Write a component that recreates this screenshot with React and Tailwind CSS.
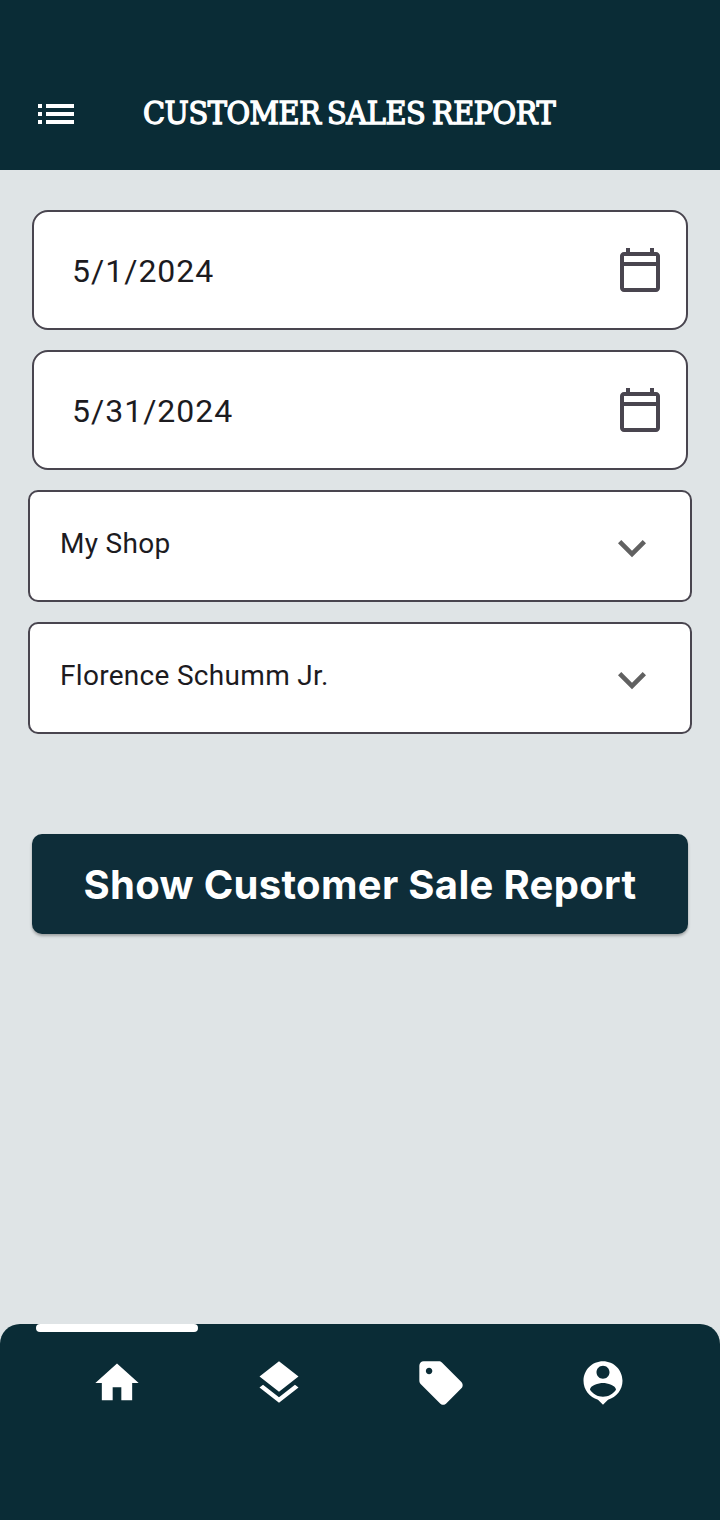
const iconPaths = {
  list: 'M3 13h2v-2H3v2zm0 4h2v-2H3v2zm0-8h2V7H3v2zm4 4h14v-2H7v2zm0 4h14v-2H7v2zM7 7v2h14V7H7z',
  calendar:
    'M20 3h-1V1h-2v2H7V1H5v2H4c-1.1 0-2 .9-2 2v16c0 1.1.9 2 2 2h16c1.1 0 2-.9 2-2V5c0-1.1-.9-2-2-2zm0 2v3H4V5h16zM4 21V10h16v11H4z',
  chevron: 'M7.41 8.59 12 13.17l4.59-4.58L18 10l-6 6-6-6z',
  home: 'M10 20v-6h4v6h5v-8h3L12 3 2 12h3v8z',
  layers:
    'M11.99 18.54l-7.37-5.73L3 14.07l9 7 9-7-1.63-1.27-7.38 5.74zM12 16l7.36-5.73L21 9l-9-7-9 7 1.63 1.27L12 16z',
  tag: 'M21.41 11.58l-9-9C12.05 2.22 11.55 2 11 2H4c-1.1 0-2 .9-2 2v7c0 .55.22 1.05.59 1.42l9 9c.36.36.86.58 1.41.58.55 0 1.05-.22 1.41-.59l7-7c.37-.36.59-.86.59-1.41 0-.55-.23-1.06-.59-1.42zM6.5 8C5.67 8 5 7.33 5 6.5S5.67 5 6.5 5 8 5.67 8 6.5 7.33 8 6.5 8z',
  person:
    'M12 2c-4.97 0-9 4.03-9 9 0 4.17 2.84 7.67 6.69 8.69L12 22l2.31-2.31C18.16 18.67 21 15.17 21 11c0-4.97-4.03-9-9-9zm0 2c1.66 0 3 1.34 3 3s-1.34 3-3 3-3-1.34-3-3 1.34-3 3-3zm0 14.3c-2.5 0-4.71-1.28-6-3.22.03-1.99 4-3.08 6-3.08 1.99 0 5.97 1.09 6 3.08-1.29 1.94-3.5 3.22-6 3.22z',
};

function Icon({ name, className }) {
  return (
    <svg viewBox="0 0 24 24" fill="currentColor" className={className} aria-hidden="true">
      <path d={iconPaths[name]} />
    </svg>
  );
}

function DateField({ value }) {
  return (
    <button className="flex h-[120px] w-full items-center justify-between rounded-[16px] border-2 border-[#49454f] bg-white pr-[22px] pl-[38px] text-[#1c1b1f]">
      <span className="pt-0.5 text-[32px] leading-10 tracking-[1px]">{value}</span>
      <Icon name="calendar" className="size-12 text-[#49454f]" />
    </button>
  );
}

function SelectField({ value }) {
  return (
    <button className="flex h-28 w-full items-start justify-between rounded-[10px] border-2 border-[#49454f] bg-white pr-[30px] pl-[30px] text-[#1c1b1f]">
      <span className="pt-[34px] text-[28px] leading-9 tracking-[0.3px]">{value}</span>
      <Icon name="chevron" className="mt-7 size-14 text-[#616161]" />
    </button>
  );
}

const tabs = ['home', 'layers', 'tag', 'person'];

export default function App() {
  return (
    <div className="flex h-[1520px] w-[720px] flex-col bg-[#dfe4e6] font-['Roboto',sans-serif]">
      <header className="flex h-[170px] shrink-0 items-start bg-[#0a2c36] pt-[90px] pl-8 text-white">
        <button aria-label="Menu">
          <Icon name="list" className="size-12" />
        </button>
        <h1 className="ml-[63px] font-['DejaVu_Serif_Condensed','DejaVu_Serif',serif] text-[32px] leading-[46px] tracking-[-0.45px] whitespace-nowrap [-webkit-text-stroke:1.3px_white] [font-stretch:condensed] [word-spacing:-2px]">
          CUSTOMER SALES REPORT
        </h1>
      </header>

      <main className="flex flex-1 flex-col pt-10">
        <div className="flex flex-col gap-5 px-8">
          <DateField value="5/1/2024" />
          <DateField value="5/31/2024" />
        </div>
        <div className="mt-5 flex flex-col gap-5 px-7">
          <SelectField value="My Shop" />
          <SelectField value="Florence Schumm Jr." />
        </div>
        <div className="mt-[100px] px-8">
          <button className="flex h-[100px] w-full items-center justify-center rounded-[10px] bg-[#0e2d39] pt-0.5 font-['Inter',sans-serif] text-[40px] leading-[48px] font-bold tracking-[0.32px] whitespace-nowrap text-white shadow-[0_2px_3px_rgba(0,0,0,0.3)]">
            Show Customer Sale Report
          </button>
        </div>
      </main>

      <nav className="h-[196px] shrink-0 rounded-t-[20px] bg-[#0a2c36] px-9 text-white">
        <div className="grid grid-cols-4">
          {tabs.map((tab, i) => (
            <button key={tab} aria-label={tab} className="flex flex-col items-center">
              <span className={i === 0 ? 'h-2 w-full rounded-full bg-white' : 'h-2 w-full'} />
              <Icon name={tab} className="mt-[25px] size-[52px]" />
            </button>
          ))}
        </div>
      </nav>
    </div>
  );
}
